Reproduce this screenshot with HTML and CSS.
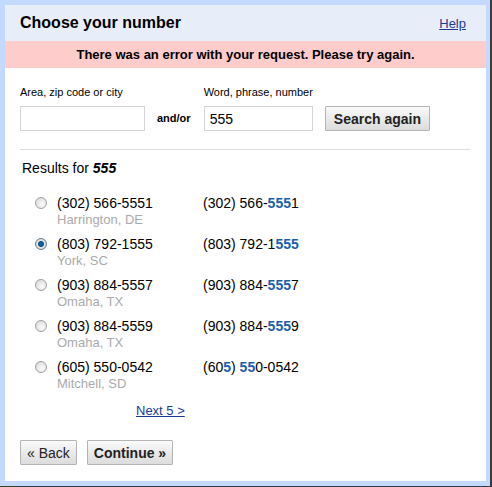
FILE: index.html
```html
<!DOCTYPE html>
<html lang="en">
<head>
    <meta charset="UTF-8">
    <title>Choose your number</title>
    <link rel="stylesheet" href="styles.css">
</head>
<body>
    <div class="frame">
        <div class="panel">
            <div class="header">
                <h1>Choose your number</h1>
                <a href="#" class="help">Help</a>
            </div>
            <div class="error">There was an error with your request. Please try again.</div>

            <!-- Search form -->
            <form class="search">
                <div class="field">
                    <label for="area">Area, zip code or city</label>
                    <input type="text" id="area" class="area">
                </div>
                <span class="andor">and/or</span>
                <div class="field">
                    <label for="word">Word, phrase, number</label>
                    <input type="text" id="word" class="word" value="555">
                </div>
                <button type="button" class="btn btn-bold">Search again</button>
            </form>

            <hr class="sep">

            <p class="results-title">Results for <b><i>555</i></b></p>

            <ul class="results">
                <li>
                    <input type="radio" name="num">
                    <div class="num">(302) 566-5551<span class="city">Harrington, DE</span></div>
                    <div class="match">(302) 566-<b>555</b>1</div>
                </li>
                <li>
                    <input type="radio" name="num" checked>
                    <div class="num">(803) 792-1555<span class="city">York, SC</span></div>
                    <div class="match">(803) 792-1<b>555</b></div>
                </li>
                <li>
                    <input type="radio" name="num">
                    <div class="num">(903) 884-5557<span class="city">Omaha, TX</span></div>
                    <div class="match">(903) 884-<b>555</b>7</div>
                </li>
                <li>
                    <input type="radio" name="num">
                    <div class="num">(903) 884-5559<span class="city">Omaha, TX</span></div>
                    <div class="match">(903) 884-<b>555</b>9</div>
                </li>
                <li>
                    <input type="radio" name="num">
                    <div class="num">(605) 550-0542<span class="city">Mitchell, SD</span></div>
                    <div class="match">(60<b>5</b>) <b>55</b>0-0542</div>
                </li>
            </ul>

            <a href="#" class="next">Next 5 &gt;</a>

            <div class="actions">
                <button type="button" class="btn">&laquo; Back</button>
                <button type="button" class="btn btn-bold">Continue &raquo;</button>
            </div>
        </div>
    </div>
</body>
</html>
```

FILE: styles.css
```css
body {
    margin: 0;
    font-family: "Liberation Sans", Arial, sans-serif;
    color: #000;
}

.frame {
    width: 481px;
    height: 476px;
    padding: 5px 4px 5px 5px;
    background: #c3d9ff;
    border-right: 2px solid #3a3a3a;
    border-bottom: 1px solid #3a3a3a;
}

.panel {
    background: #fff;
    height: 476px;
}

.header {
    height: 36px;
    display: flex;
    align-items: center;
    justify-content: space-between;
    padding: 0 20px 0 15px;
    background: #e8eef9;
}

h1 {
    margin: 0;
    font-size: 16px;
    font-weight: bold;
}

a {
    color: #1a3a94;
}

.help {
    font-size: 13px;
}

.error {
    height: 27px;
    line-height: 27px;
    text-align: center;
    font-size: 13px;
    font-weight: bold;
    background: #ffcccc;
}

.search {
    display: flex;
    align-items: flex-end;
    gap: 12px;
    margin: 18px 15px 0;
}

.field {
    display: flex;
    flex-direction: column;
    gap: 7px;
}

label {
    font-size: 11px;
    line-height: 13px;
}

input[type="text"] {
    box-sizing: border-box;
    height: 25px;
    margin: 0;
    padding: 0 5px;
    border: 1px solid #d4d4d4;
    font-family: inherit;
    font-size: 14px;
}

.area {
    width: 125px;
}

.word {
    width: 109px;
}

.andor {
    font-size: 11px;
    font-weight: bold;
    line-height: 25px;
    margin-right: 1px;
}

.btn {
    height: 25px;
    margin: 0;
    padding: 0 7px;
    border: 1px solid #b4b4b4;
    border-radius: 1px;
    background: linear-gradient(#fafafa, #eaeaea 50%, #dcdcdc);
    font-family: inherit;
    font-size: 14px;
    color: #222;
}

.btn-bold {
    font-weight: bold;
}

.search .btn {
    width: 105px;
}

.sep {
    width: 450px;
    margin: 18px 0 0 15px;
    border: none;
    border-top: 1px solid #dddddd;
}

.results-title {
    margin: 10px 0 0 17px;
    font-size: 14px;
    line-height: 17px;
}

.results {
    list-style: none;
    margin: 17px 0 0 30px;
    padding: 0;
    font-size: 14px;
}

.results li {
    display: flex;
    align-items: flex-start;
    height: 41px;
}

.results input[type="radio"] {
    appearance: none;
    box-sizing: border-box;
    width: 12px;
    height: 12px;
    margin: 3px 10px 0 0;
    border: 1px solid #a0a0a0;
    border-radius: 50%;
    background: radial-gradient(circle at 60% 65%, #fafafa, #d6d6d6);
}

.results input[type="radio"]:checked {
    border-color: #6a7d8c;
    background: radial-gradient(circle, #1e6fae 0, #0d4f85 2.5px, #e4e4e4 3.5px, #cfcfcf);
}

.num {
    width: 146px;
    line-height: 18px;
}

.city {
    display: block;
    font-size: 13px;
    line-height: 15px;
    color: #aaaaaa;
}

.match {
    line-height: 18px;
}

.match b {
    color: #1b5ea9;
}

.next {
    display: block;
    width: max-content;
    margin: 4px 0 0 131px;
    font-size: 13px;
    line-height: 15px;
}

.actions {
    display: flex;
    gap: 10px;
    margin: 22px 0 0 15px;
}

.actions .btn {
    padding: 0 6px;
}
```
